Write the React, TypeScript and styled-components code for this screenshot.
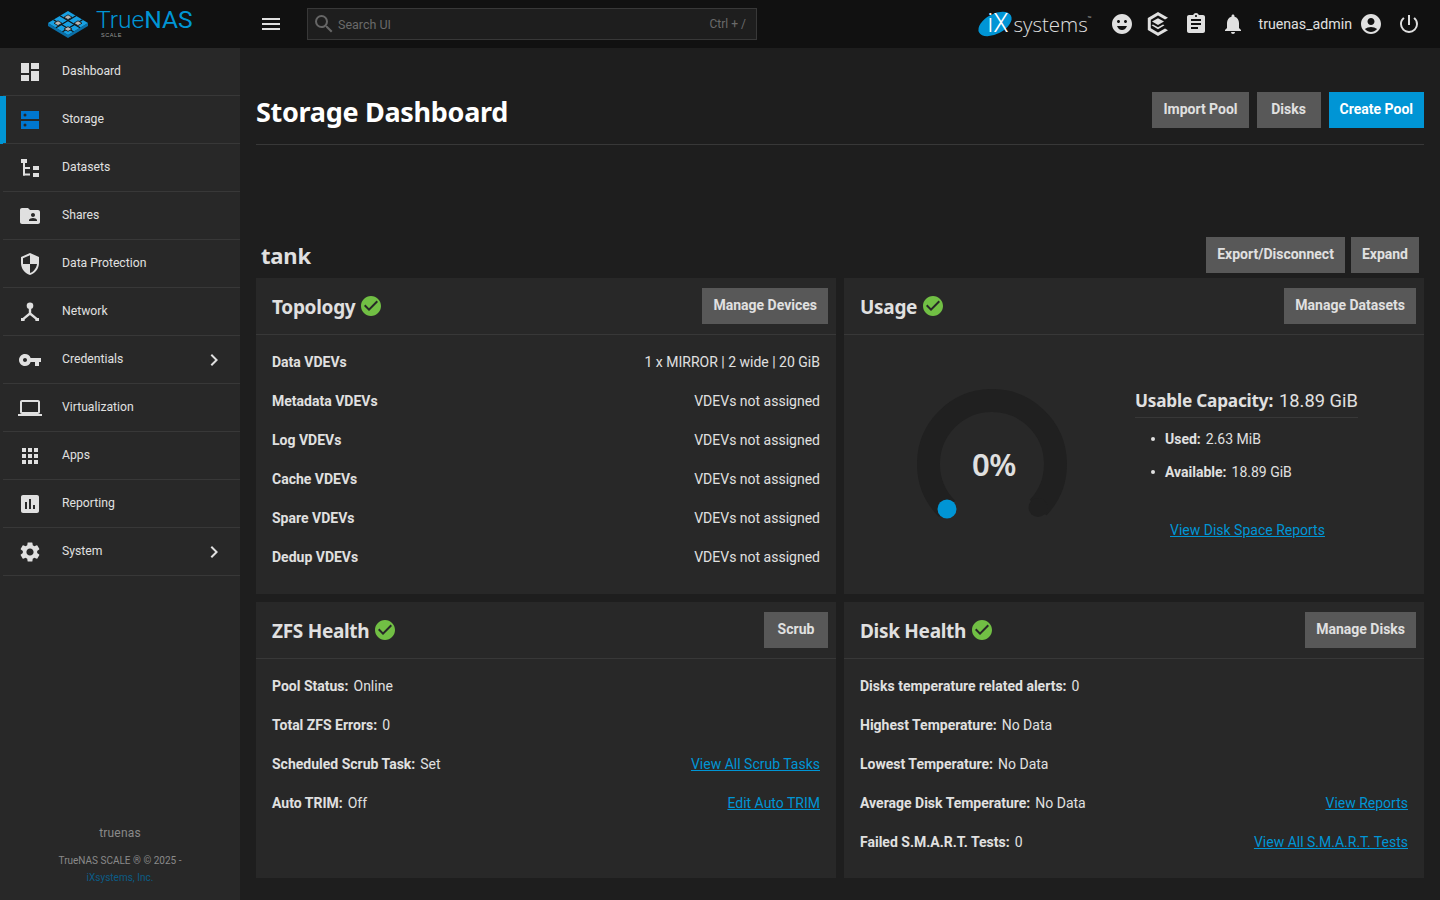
import React from 'react';
import styled, { createGlobalStyle } from 'styled-components';
import {
  MdDashboard,
  MdFolderShared,
  MdSecurity,
  MdVpnKey,
  MdLaptop,
  MdApps,
  MdAssessment,
  MdSettings,
  MdChevronRight,
  MdEmojiEmotions,
  MdAssignment,
  MdNotifications,
  MdAccountCircle,
  MdPowerSettingsNew,
  MdMenu,
  MdSearch,
  MdCheckCircle,
} from 'react-icons/md';

const GlobalStyle = createGlobalStyle`
  html, body {
    margin: 0;
    padding: 0;
    height: 100%;
    background: #1e1e1e;
    font-family: Roboto, "Liberation Sans", sans-serif;
    color: #e0e0e0;
  }
  * { box-sizing: border-box; }
`;

const Page = styled.div`
  width: 1440px;
  height: 900px;
  display: flex;
  flex-direction: column;
  overflow: hidden;
`;

const TopBar = styled.header`
  height: 48px;
  flex: none;
  background: #111111;
  display: flex;
  align-items: center;
`;

const LogoArea = styled.div`
  width: 240px;
  height: 48px;
  flex: none;
  display: flex;
  align-items: center;
  padding-left: 48px;
  gap: 8px;
`;

const Brand = styled.div`
  display: flex;
  flex-direction: column;
  align-items: flex-start;
  margin-top: -2px;
`;

const BrandName = styled.div`
  font-size: 24.6px;
  line-height: 24px;
  font-weight: 300;
  color: #0095d5;
  b {
    font-weight: 400;
  }
`;

const BrandSub = styled.div`
  font-family: "Liberation Sans", sans-serif;
  font-size: 5.5px;
  line-height: 6px;
  color: #999999;
  letter-spacing: 0.6px;
  margin: 0 0 0 5px;
`;

const MenuButton = styled.div`
  width: 62px;
  margin-right: 5px;
  flex: none;
  display: flex;
  justify-content: center;
  color: #e0e0e0;
  font-size: 24px;
  svg { display: block; }
`;

const SearchBox = styled.div`
  width: 450px;
  height: 32px;
  flex: none;
  background: #1e1e1e;
  border: 1px solid #383838;
  display: flex;
  align-items: center;
  padding: 0 10px 0 4px;
  font-size: 12.5px;
  color: #6a6a6a;
  svg { font-size: 24px; margin-right: 2px; color: #666666; }
`;

const SearchHint = styled.span`
  margin-left: auto;
  font-size: 12px;
`;

const TopRight = styled.div`
  margin-left: auto;
  display: flex;
  align-items: center;
  padding-right: 19px;
  color: #e0e0e0;
`;

const IxLogo = styled.div`
  display: flex;
  align-items: center;
  width: 111px;
  margin-right: 21px;
`;

const IxBadge = styled.div`
  width: 34px;
  height: 24px;
  flex: none;
  display: flex;
  align-items: center;
  justify-content: center;
  position: relative;
  &::before {
    content: '';
    position: absolute;
    left: -1px;
    top: 2px;
    width: 36px;
    height: 20px;
    border-radius: 50%;
    transform: rotate(-28deg);
    background: #0095d5;
  }
`;

const IxBadgeText = styled.span`
  position: relative;
  font-size: 25px;
  line-height: 24px;
  font-weight: 300;
  color: #ffffff;
  margin-left: 5px;
`;

const IxWord = styled.span`
  font-family: "Open Sans", sans-serif;
  font-weight: 300;
  font-size: 20.5px;
  line-height: 24px;
  margin-left: 1px;
  color: #e0e0e0;
  sup { font-size: 5px; vertical-align: 12px; line-height: 0; }
`;

const TopIcon = styled.div<{ $gap: number }>`
  display: flex;
  font-size: 24px;
  margin-right: ${(p) => p.$gap}px;
  svg { display: block; }
`;

const UserName = styled.span`
  font-size: 14.2px;
  margin-right: 7px;
  color: #e0e0e0;
`;

const Body = styled.div`
  flex: 1;
  display: flex;
  min-height: 0;
`;

const Sidebar = styled.nav`
  width: 240px;
  flex: none;
  background: #282828;
  display: flex;
  flex-direction: column;
`;

const NavList = styled.div`
  display: flex;
  flex-direction: column;
`;

const NavItem = styled.div<{ $active?: boolean }>`
  height: 48px;
  display: flex;
  align-items: center;
  position: relative;
  padding-left: 18px;
  font-size: 12.2px;
  color: #e0e0e0;
  &::after {
    content: '';
    position: absolute;
    left: 3px;
    right: 0;
    bottom: 0;
    height: 1px;
    background: #383838;
  }
  ${(p) =>
    p.$active &&
    `
    &::before {
      content: '';
      position: absolute;
      left: 0;
      top: 0;
      bottom: 0;
      width: 6px;
      background: #0095d5;
    }
  `}
`;

const NavIcon = styled.div<{ $active?: boolean }>`
  width: 24px;
  height: 24px;
  flex: none;
  margin-right: 20px;
  font-size: 24px;
  color: ${(p) => (p.$active ? '#0095d5' : '#e0e0e0')};
  svg { display: block; }
`;

const NavLabel = styled.span`
  padding-bottom: 2px;
`;

const NavArrow = styled.div`
  margin-left: auto;
  margin-right: 14px;
  font-size: 24px;
  display: flex;
`;

const SideFooter = styled.div`
  margin-top: auto;
  padding-bottom: 14px;
  text-align: center;
  color: #8a8a8a;
`;

const HostName = styled.div`
  font-size: 12px;
  line-height: 14px;
  margin-bottom: 12px;
  letter-spacing: 0.2px;
`;

const Copy = styled.div`
  font-size: 10px;
  line-height: 17px;
  a { color: #0b5c86; text-decoration: none; }
`;

const Main = styled.main`
  flex: 1;
  padding: 0 16px;
  min-width: 0;
  background: #1e1e1e;
`;

const PageHeader = styled.div`
  height: 97px;
  display: flex;
  align-items: center;
  justify-content: space-between;
  border-bottom: 1px solid #383838;
  padding-top: 33px;
  padding-bottom: 1px;
  margin-bottom: 92px;
`;

const PageTitle = styled.h1`
  margin: 0;
  font-family: "Noto Sans", sans-serif;
  font-size: 27px;
  line-height: 38px;
  font-weight: 700;
  color: #ffffff;
  letter-spacing: -0.3px;
`;

const Actions = styled.div`
  display: flex;
  gap: 8px;
  margin-bottom: 4px;
`;

const Button = styled.div<{ $primary?: boolean }>`
  height: 36px;
  min-width: 64px;
  padding: 0 11px 2px;
  display: flex;
  align-items: center;
  justify-content: center;
  font-size: 14px;
  font-weight: 700;
  background: ${(p) => (p.$primary ? '#0095d5' : '#585858')};
  color: ${(p) => (p.$primary ? '#ffffff' : '#e0e0e0')};
`;

const PoolHeader = styled.div`
  height: 41px;
  display: flex;
  align-items: flex-start;
  justify-content: space-between;
  padding: 0 5px;
`;

const PoolName = styled.h2`
  margin: 0;
  font-family: "Noto Sans", sans-serif;
  font-size: 22px;
  line-height: 32px;
  font-weight: 700;
  color: #e0e0e0;
  padding-top: 2px;
  letter-spacing: -0.2px;
`;

const PoolActions = styled(Actions)`
  gap: 6px;
  margin-bottom: 0;
`;

const CardGrid = styled.div`
  display: grid;
  grid-template-columns: 580px 580px;
  grid-template-rows: 316px 276px;
  gap: 8px;
`;

const Card = styled.section`
  background: #282828;
  display: flex;
  flex-direction: column;
`;

const CardHeader = styled.div`
  height: 57px;
  flex: none;
  display: flex;
  align-items: center;
  padding: 0 8px 0 16px;
  border-bottom: 1px solid #383838;
`;

const CardTitle = styled.h3`
  margin: 0;
  padding-top: 2px;
  font-family: "Noto Sans", sans-serif;
  font-size: 19px;
  line-height: 26px;
  font-weight: 700;
  letter-spacing: -0.3px;
  color: #e0e0e0;
`;

const StatusIcon = styled.div`
  display: flex;
  margin-left: 4px;
  font-size: 24px;
  color: #71bf44;
  position: relative;
  svg { display: block; position: relative; }
  &::before {
    content: '';
    position: absolute;
    left: 6px;
    top: 6px;
    width: 12px;
    height: 12px;
    background: #282828;
  }
`;

const CardAction = styled(Button)`
  margin-left: auto;
  margin-top: -1px;
`;

const Rows = styled.div`
  padding: 7px 16px 0;
  display: flex;
  flex-direction: column;
`;

const Row = styled.div`
  height: 39px;
  display: flex;
  align-items: center;
  justify-content: space-between;
  font-size: 14px;
  color: #e0e0e0;
`;

const RowLabel = styled.span`
  b {
    font-weight: 700;
    margin-right: 5px;
  }
`;

const RowLink = styled.a`
  color: #0095d5;
  text-decoration: underline;
  font-size: 14px;
`;

const UsageBody = styled.div`
  flex: 1;
  display: flex;
  position: relative;
`;

const Gauge = styled.div`
  width: 150px;
  height: 150px;
  position: absolute;
  left: 73px;
  top: 54px;
`;

const GaugeValue = styled.div`
  position: absolute;
  left: 128px;
  top: 110px;
  font-family: "Noto Sans", sans-serif;
  font-size: 31px;
  line-height: 38px;
  font-weight: 600;
  color: #e0e0e0;
  letter-spacing: -0.5px;
`;

const Capacity = styled.div`
  margin-left: 291px;
  margin-top: 50px;
  width: 240px;
  display: flex;
  flex-direction: column;
  align-items: flex-start;
`;

const CapacityTitle = styled.div`
  font-size: 18.3px;
  line-height: 31px;
  padding-bottom: 1px;
  border-bottom: 1px solid #383838;
  b {
    font-family: "Noto Sans", sans-serif;
    font-weight: 700;
    font-size: 17.2px;
    letter-spacing: -0.2px;
    margin-right: 6px;
  }
`;

const BulletList = styled.ul`
  list-style: none;
  margin: 4px 0 0;
  padding: 0 0 0 16px;
`;

const Bullet = styled.li`
  height: 33px;
  display: flex;
  align-items: center;
  font-size: 14px;
  position: relative;
  padding-left: 14px;
  &::before {
    content: '';
    position: absolute;
    left: 0;
    top: 15px;
    width: 4px;
    height: 4px;
    border-radius: 50%;
    background: #e0e0e0;
  }
  b {
    font-weight: 700;
    margin-right: 5px;
  }
`;

const ReportLink = styled(RowLink)`
  margin: 34px 0 0 35px;
`;

const TrueNasMark = () => (
  <svg width="40" height="27" viewBox="0 0 40 27" style={{ flex: 'none' }}>
    <polygon points="0,12 20,24 40,12 40,15 20,27 0,15" fill="#0a6fa8" />
    <polygon points="20,0 40,12 20,24 0,12" fill="#17a0e3" />
    <g stroke="#111111" strokeWidth="1.1">
      <line x1="12" y1="4.8" x2="32" y2="16.8" />
      <line x1="5.5" y1="8.7" x2="25.5" y2="20.7" />
      <line x1="28" y1="4.8" x2="8" y2="16.8" />
      <line x1="34.5" y1="8.7" x2="14.5" y2="20.7" />
    </g>
    <g fill="#b5b5b5" stroke="#111111" strokeWidth="0.8">
      <polygon points="20,3.8 24,6.2 20,8.6 16,6.2" />
      <polygon points="10,9.8 14,12.2 10,14.6 6,12.2" />
      <polygon points="30,9.8 34,12.2 30,14.6 26,12.2" />
      <polygon points="20,15.6 24,18 20,20.4 16,18" />
    </g>
  </svg>
);

const StorageIcon = () => (
  <svg width="24" height="24" viewBox="0 0 24 24">
    <path
      fill="#0077d0"
      fillRule="evenodd"
      d="M3 3h18v8H3zM7 5.5a1.5 1.5 0 1 0 0 3 1.5 1.5 0 0 0 0-3zM3 13h18v8H3zM7 15.5a1.5 1.5 0 1 0 0 3 1.5 1.5 0 0 0 0-3z"
    />
  </svg>
);

const DatasetsIcon = () => (
  <svg width="24" height="24" viewBox="0 0 24 24" fill="#e0e0e0">
    <rect x="3" y="3" width="6" height="4" />
    <rect x="5" y="7" width="2" height="12.5" />
    <rect x="5" y="11" width="7" height="2" />
    <rect x="5" y="17.5" width="7" height="2" />
    <rect x="15" y="10" width="6" height="4" />
    <rect x="15" y="17" width="6" height="4" />
  </svg>
);

const NetworkIcon = () => (
  <svg width="24" height="24" viewBox="0 0 24 24">
    <circle cx="12" cy="5.7" r="3.3" fill="#e0e0e0" />
    <path d="M12 6v7.5L4.8 19.4M12 13.5l7.2 5.9" fill="none" stroke="#e0e0e0" strokeWidth="2.4" />
    <rect x="3" y="18" width="3.6" height="3" fill="#e0e0e0" />
    <rect x="17.4" y="18" width="3.6" height="3" fill="#e0e0e0" />
  </svg>
);

const TrueCommandIcon = () => (
  <svg width="24" height="24" viewBox="0 0 24 24" fill="#e0e0e0">
    <path d="M12 0l10 5.8-3 1.8L12 3.5 4.8 7.7v8.6L12 20.5l7-4 3 1.7L12 24 1.8 18V6z" />
    <path d="M12 6.2l6 3.4-6 3.5-6-3.5zM7 12.4l5 2.9 5-2.9 1.5.9L12 17.2l-6.5-3.9z" />
  </svg>
);

const navItems = [
  { label: 'Dashboard', icon: <MdDashboard /> },
  { label: 'Storage', icon: <StorageIcon />, active: true },
  { label: 'Datasets', icon: <DatasetsIcon /> },
  { label: 'Shares', icon: <MdFolderShared /> },
  { label: 'Data Protection', icon: <MdSecurity /> },
  { label: 'Network', icon: <NetworkIcon /> },
  { label: 'Credentials', icon: <MdVpnKey />, arrow: true },
  { label: 'Virtualization', icon: <MdLaptop /> },
  { label: 'Apps', icon: <MdApps /> },
  { label: 'Reporting', icon: <MdAssessment /> },
  { label: 'System', icon: <MdSettings />, arrow: true },
];

const topology = [
  ['Data VDEVs', '1 x MIRROR | 2 wide | 20 GiB'],
  ['Metadata VDEVs', 'VDEVs not assigned'],
  ['Log VDEVs', 'VDEVs not assigned'],
  ['Cache VDEVs', 'VDEVs not assigned'],
  ['Spare VDEVs', 'VDEVs not assigned'],
  ['Dedup VDEVs', 'VDEVs not assigned'],
];

const zfsHealth = [
  ['Pool Status:', 'Online'],
  ['Total ZFS Errors:', '0'],
  ['Scheduled Scrub Task:', 'Set', 'View All Scrub Tasks'],
  ['Auto TRIM:', 'Off', 'Edit Auto TRIM'],
];

const diskHealth = [
  ['Disks temperature related alerts:', '0'],
  ['Highest Temperature:', 'No Data'],
  ['Lowest Temperature:', 'No Data'],
  ['Average Disk Temperature:', 'No Data', 'View Reports'],
  ['Failed S.M.A.R.T. Tests:', '0', 'View All S.M.A.R.T. Tests'],
];

const HealthRows: React.FC<{ rows: string[][] }> = ({ rows }) => (
  <Rows>
    {rows.map(([label, value, link]) => (
      <Row key={label}>
        <RowLabel>
          <b>{label}</b>
          {value}
        </RowLabel>
        {link && <RowLink>{link}</RowLink>}
      </Row>
    ))}
  </Rows>
);

const CardTop: React.FC<{ title: string; action: string }> = ({ title, action }) => (
  <CardHeader>
    <CardTitle>{title}</CardTitle>
    <StatusIcon>
      <MdCheckCircle />
    </StatusIcon>
    <CardAction>{action}</CardAction>
  </CardHeader>
);

const App: React.FC = () => {
  return (
    <Page>
      <GlobalStyle />
      <TopBar>
        <LogoArea>
          <TrueNasMark />
          <Brand>
            <BrandName>
              True<b>NAS</b>
            </BrandName>
            <BrandSub>SCALE</BrandSub>
          </Brand>
        </LogoArea>
        <MenuButton>
          <MdMenu />
        </MenuButton>
        <SearchBox>
          <MdSearch />
          Search UI
          <SearchHint>Ctrl + /</SearchHint>
        </SearchBox>
        <TopRight>
          <IxLogo>
            <IxBadge>
              <IxBadgeText>iX</IxBadgeText>
            </IxBadge>
            <IxWord>
              systems<sup>™</sup>
            </IxWord>
          </IxLogo>
          <TopIcon $gap={12}>
            <MdEmojiEmotions />
          </TopIcon>
          <TopIcon $gap={14}>
            <TrueCommandIcon />
          </TopIcon>
          <TopIcon $gap={13}>
            <MdAssignment />
          </TopIcon>
          <TopIcon $gap={13}>
            <MdNotifications />
          </TopIcon>
          <UserName>truenas_admin</UserName>
          <TopIcon $gap={14}>
            <MdAccountCircle />
          </TopIcon>
          <TopIcon $gap={0}>
            <MdPowerSettingsNew />
          </TopIcon>
        </TopRight>
      </TopBar>
      <Body>
        <Sidebar>
          <NavList>
            {navItems.map((item) => (
              <NavItem key={item.label} $active={item.active}>
                <NavIcon $active={item.active}>{item.icon}</NavIcon>
                <NavLabel>{item.label}</NavLabel>
                {item.arrow && (
                  <NavArrow>
                    <MdChevronRight />
                  </NavArrow>
                )}
              </NavItem>
            ))}
          </NavList>
          <SideFooter>
            <HostName>truenas</HostName>
            <Copy>
              TrueNAS SCALE ® © 2025 -
              <br />
              <a>iXsystems, Inc.</a>
            </Copy>
          </SideFooter>
        </Sidebar>
        <Main>
          <PageHeader>
            <PageTitle>Storage Dashboard</PageTitle>
            <Actions>
              <Button>Import Pool</Button>
              <Button>Disks</Button>
              <Button $primary>Create Pool</Button>
            </Actions>
          </PageHeader>
          <PoolHeader>
            <PoolName>tank</PoolName>
            <PoolActions>
              <Button>Export/Disconnect</Button>
              <Button>Expand</Button>
            </PoolActions>
          </PoolHeader>
          <CardGrid>
            <Card>
              <CardTop title="Topology" action="Manage Devices" />
              <Rows>
                {topology.map(([label, value]) => (
                  <Row key={label}>
                    <RowLabel>
                      <b>{label}</b>
                    </RowLabel>
                    <span>{value}</span>
                  </Row>
                ))}
              </Rows>
            </Card>
            <Card>
              <CardTop title="Usage" action="Manage Datasets" />
              <UsageBody>
                <Gauge>
                  <svg width="150" height="150" viewBox="0 0 150 150">
                    <path
                      d="M 30.1 119.9 A 63.5 63.5 0 1 1 121.1 118.6"
                      fill="none"
                      stroke="#202020"
                      strokeWidth="23"
                    />
                    <circle cx="121" cy="118.5" r="9.5" fill="#202020" />
                    <circle cx="30" cy="120" r="9.5" fill="#0095d5" />
                  </svg>
                </Gauge>
                <GaugeValue>0%</GaugeValue>
                <Capacity>
                  <CapacityTitle>
                    <b>Usable Capacity:</b>18.89 GiB
                  </CapacityTitle>
                  <BulletList>
                    <Bullet>
                      <b>Used:</b>2.63 MiB
                    </Bullet>
                    <Bullet>
                      <b>Available:</b>18.89 GiB
                    </Bullet>
                  </BulletList>
                  <ReportLink>View Disk Space Reports</ReportLink>
                </Capacity>
              </UsageBody>
            </Card>
            <Card>
              <CardTop title="ZFS Health" action="Scrub" />
              <HealthRows rows={zfsHealth} />
            </Card>
            <Card>
              <CardTop title="Disk Health" action="Manage Disks" />
              <HealthRows rows={diskHealth} />
            </Card>
          </CardGrid>
        </Main>
      </Body>
    </Page>
  );
};

export default App;
